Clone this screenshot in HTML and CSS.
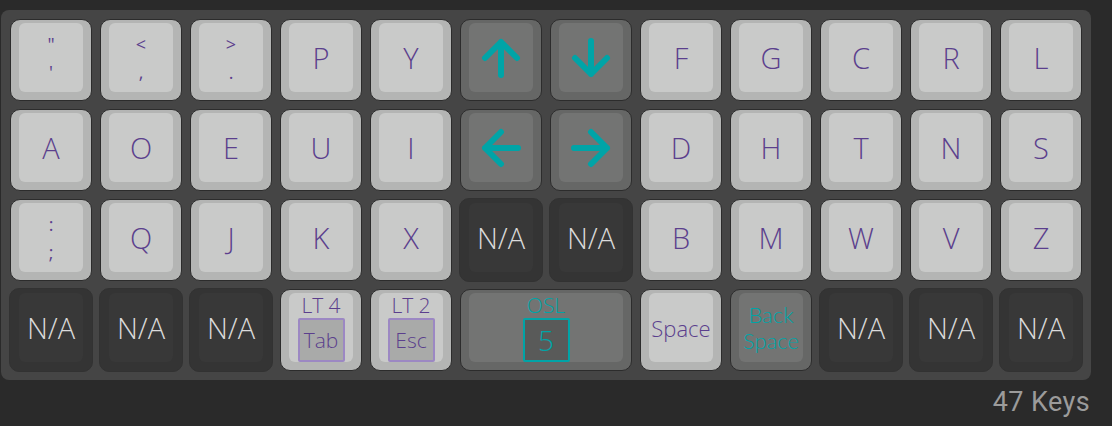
FILE: index.html
```html
<!DOCTYPE html>
<html>
<head>
<meta charset="utf-8">
<link rel="stylesheet" href="styles.css">
</head>
<body>
<div class="board">
  <div class="grid">
    <div class="key light"><div class="face dual"><span>"</span><span>'</span></div></div>
    <div class="key light"><div class="face dual"><span>&lt;</span><span>,</span></div></div>
    <div class="key light"><div class="face dual"><span>&gt;</span><span>.</span></div></div>
    <div class="key light"><div class="face">P</div></div>
    <div class="key light"><div class="face">Y</div></div>
    <div class="key gray"><div class="face"><svg class="arrow" viewBox="0 0 40 40"><path d="M20 4V37M4 20L20 4L36 20"/></svg></div></div>
    <div class="key gray"><div class="face"><svg class="arrow" viewBox="0 0 40 40"><path d="M20 3V36M4 20L20 36L36 20"/></svg></div></div>
    <div class="key light"><div class="face">F</div></div>
    <div class="key light"><div class="face">G</div></div>
    <div class="key light"><div class="face">C</div></div>
    <div class="key light"><div class="face">R</div></div>
    <div class="key light"><div class="face">L</div></div>

    <div class="key light"><div class="face">A</div></div>
    <div class="key light"><div class="face">O</div></div>
    <div class="key light"><div class="face">E</div></div>
    <div class="key light"><div class="face">U</div></div>
    <div class="key light"><div class="face">I</div></div>
    <div class="key gray"><div class="face"><svg class="arrow" viewBox="0 0 40 40"><path d="M4 20H37M20 4L4 20L20 36"/></svg></div></div>
    <div class="key gray"><div class="face"><svg class="arrow" viewBox="0 0 40 40"><path d="M3 20H36M20 4L36 20L20 36"/></svg></div></div>
    <div class="key light"><div class="face">D</div></div>
    <div class="key light"><div class="face">H</div></div>
    <div class="key light"><div class="face">T</div></div>
    <div class="key light"><div class="face">N</div></div>
    <div class="key light"><div class="face">S</div></div>

    <div class="key light"><div class="face dual"><span>:</span><span>;</span></div></div>
    <div class="key light"><div class="face">Q</div></div>
    <div class="key light"><div class="face">J</div></div>
    <div class="key light"><div class="face">K</div></div>
    <div class="key light"><div class="face">X</div></div>
    <div class="key dark"><div class="face">N/A</div></div>
    <div class="key dark"><div class="face">N/A</div></div>
    <div class="key light"><div class="face">B</div></div>
    <div class="key light"><div class="face">M</div></div>
    <div class="key light"><div class="face">W</div></div>
    <div class="key light"><div class="face">V</div></div>
    <div class="key light"><div class="face">Z</div></div>

    <div class="key dark"><div class="face">N/A</div></div>
    <div class="key dark"><div class="face">N/A</div></div>
    <div class="key dark"><div class="face">N/A</div></div>
    <div class="key light"><div class="face layer"><span class="lbl">LT 4</span><span class="box">Tab</span></div></div>
    <div class="key light"><div class="face layer"><span class="lbl">LT 2</span><span class="box">Esc</span></div></div>
    <div class="key gray wide"><div class="face layer"><span class="lbl">OSL</span><span class="box num">5</span></div></div>
    <div class="key light"><div class="face small">Space</div></div>
    <div class="key gray"><div class="face two"><span>Back</span><span>Space</span></div></div>
    <div class="key dark"><div class="face">N/A</div></div>
    <div class="key dark"><div class="face">N/A</div></div>
    <div class="key dark"><div class="face">N/A</div></div>
  </div>
</div>
<div class="count">47 Keys</div>
</body>
</html>
```

FILE: styles.css
```css
html, body {
  margin: 0;
  padding: 0;
  background: #2a2a2a;
  width: 1112px;
  height: 426px;
  overflow: hidden;
}

.board {
  display: inline-block;
  margin: 10px 0 0 1px;
  padding: 8px 8px 8px 8px;
  background: #454545;
  border-radius: 8px;
}

.grid {
  display: grid;
  grid-template-columns: repeat(12, 84px);
  grid-auto-rows: 84px;
  gap: 6px;
}

.key {
  box-sizing: border-box;
  width: 84px;
  height: 84px;
  border-radius: 10px;
  border: 1px solid #313131;
  padding: 4px 9px 9px 9px;
  display: flex;
  font-family: "Open Sans", "Lato", sans-serif;
  font-weight: 300;
}

.key.light, .key.gray {
  width: 82px;
  height: 82px;
  margin: 1px;
  padding: 3px 8px 8px 8px;
  border-color: #2c2c2c;
}

.key.wide {
  grid-column: span 2;
  width: auto;
}

.face {
  flex: 1;
  border-radius: 6px;
  display: flex;
  flex-direction: column;
  align-items: center;
  justify-content: center;
  font-size: 29px;
  line-height: 1;
  position: relative;
}

.light { background: #b4b5b4; }
.light .face { background: #c9cac9; color: #5b3f8d; }

.gray { background: #666766; }
.gray .face { background: #737473; color: #00a4a7; }

.dark { background: #343434; border-color: #323232; }
.dark .face { background: #383838; color: #dadada; }

.face.dual {
  font-size: 18px;
  gap: 8px;
  font-weight: 400;
}
.face.dual span {
  line-height: 20px;
}

.arrow {
  width: 40px;
  height: 40px;
  fill: none;
  stroke: #00a4a7;
  stroke-width: 6;
  stroke-linecap: round;
  stroke-linejoin: round;
}

.face.layer {
  justify-content: flex-start;
  font-size: 21px;
}
.face.layer .lbl {
  line-height: 22px;
  margin-bottom: 2px;
  margin-top: 1px;
}
.box {
  box-sizing: border-box;
  width: 47px;
  height: 47px;
  border: 2px solid #9c88c3;
  border-radius: 2px;
  background: #a9aaa9;
  display: flex;
  align-items: center;
  justify-content: center;
  font-size: 21px;
}
.box.num {
  background: #595a59;
  border-color: #00a4a7;
  font-size: 28px;
}

.face.small {
  font-size: 22px;
}

.face.two {
  font-family: "Lato", sans-serif;
  font-size: 22px;
}
.face.two span {
  line-height: 26px;
}

.count {
  width: 1090px;
  text-align: right;
  font-family: "Roboto", sans-serif;
  font-size: 27px;
  letter-spacing: 0.4px;
  color: #9b9b9b;
  margin-top: 6px;
}
```
